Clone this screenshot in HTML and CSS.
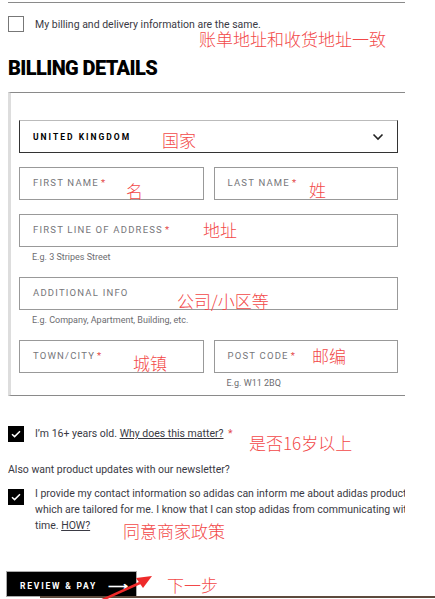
FILE: index.html
```html
<!doctype html>
<html lang="en">
    <head>
        <meta charset="UTF-8" />
        <meta name="viewport" content="width=device-width, initial-scale=1.0" />
        <title>Billing Details</title>
        <link rel="stylesheet" href="styles.css">
    </head>
    <body>
        <div class="page">
            <div class="topRule"></div>

            <label class="check sameAddress">
                <span class="box"></span>
                <span class="checkText">My billing and delivery information are the same.</span>
            </label>

            <h2 class="title">BILLING DETAILS</h2>

            <div class="billing">
                <div class="select">
                    <span>UNITED KINGDOM</span>
                    <svg width="12" height="8" viewBox="0 0 12 8"><path d="M1.5 1.5 L6 6 L10.5 1.5" fill="none" stroke="#222" stroke-width="1.6"/></svg>
                </div>

                <div class="row">
                    <div class="field"><span class="label">FIRST NAME<i>*</i></span></div>
                    <div class="field"><span class="label">LAST NAME<i>*</i></span></div>
                </div>

                <div class="field"><span class="label">FIRST LINE OF ADDRESS<i>*</i></span></div>
                <div class="hint">E.g. 3 Stripes Street</div>

                <div class="field"><span class="label">ADDITIONAL INFO</span></div>
                <div class="hint">E.g. Company, Apartment, Building, etc.</div>

                <div class="row">
                    <div class="col">
                        <div class="field"><span class="label">TOWN/CITY<i>*</i></span></div>
                    </div>
                    <div class="col">
                        <div class="field"><span class="label">POST CODE<i>*</i></span></div>
                        <div class="hint">E.g. W11 2BQ</div>
                    </div>
                </div>
            </div>

            <label class="check ageCheck">
                <span class="box checked">
                    <svg width="10" height="8" viewBox="0 0 10 8"><path d="M1 4.2 L3.6 6.6 L9 1.2" fill="none" stroke="#fff" stroke-width="1.5"/></svg>
                </span>
                <span class="checkText">I&#8217;m 16+ years old. <u>Why does this matter?</u> <i class="req">*</i></span>
            </label>

            <p class="question">Also want product updates with our newsletter?</p>

            <label class="check newsCheck">
                <span class="box checked">
                    <svg width="10" height="8" viewBox="0 0 10 8"><path d="M1 4.2 L3.6 6.6 L9 1.2" fill="none" stroke="#fff" stroke-width="1.5"/></svg>
                </span>
                <span class="checkText lines">
                    <span>I provide my contact information so adidas can inform me about adidas products</span>
                    <span>which are tailored for me. I know that I can stop adidas from communicating with me at any</span>
                    <span>time. <u>HOW?</u></span>
                </span>
            </label>

            <button class="payButton">REVIEW &amp; PAY <span class="arrow">&#10230;</span></button>
            <div class="bottomRule"></div>

            <!-- red notes drawn on top of the screenshot -->
            <span class="note n1">账单地址和收货地址一致</span>
            <span class="note n2">国家</span>
            <span class="note n3">名</span>
            <span class="note n4">姓</span>
            <span class="note n5">地址</span>
            <span class="note n6">公司/小区等</span>
            <span class="note n7">城镇</span>
            <span class="note n8">邮编</span>
            <span class="note n9">是否16岁以上</span>
            <span class="note n10">同意商家政策</span>
            <span class="note n11">下一步</span>
            <svg class="redArrow" width="70" height="30" viewBox="0 0 70 30">
                <path d="M2 29 L44 10" stroke="#ee2a2a" stroke-width="2.5" fill="none"/>
                <path d="M54 4 L38 6 L45 16 Z" fill="#ee2a2a"/>
            </svg>
        </div>
    </body>
</html>
```

FILE: styles.css
```css
body {
    margin: 0;
    font-family: Roboto, "Noto Sans", sans-serif;
    color: #3a3a44;
    background: #fff;
}
.page {
    position: relative;
    width: 435px;
    height: 599px;
    overflow: hidden;
    padding: 2px 0 0 8px;
    box-sizing: border-box;
}
.topRule {
    width: 397px;
    border-top: 1px solid #8a8a8a;
}
.check {
    display: flex;
    align-items: flex-start;
    width: 397px;
    overflow: hidden;
}
.box {
    flex: none;
    width: 14px;
    height: 14px;
    border: 1px solid #777;
    display: flex;
    align-items: center;
    justify-content: center;
}
.box.checked {
    width: 16px;
    height: 16px;
    border: none;
    background: #000;
}
.checkText {
    font-size: 10.5px;
    margin-left: 11px;
    white-space: nowrap;
}
.sameAddress {
    margin-top: 13px;
}
.sameAddress .checkText {
    margin-top: 2px;
}
.title {
    margin: 25px 0 0 0;
    font-size: 20px;
    font-weight: 900;
    letter-spacing: -0.6px;
    color: #000;
    line-height: 22px;
}
.billing {
    box-sizing: border-box;
    width: 397px;
    margin-top: 13px;
    border-top: 1px solid #8a8a8a;
    border-left: 3px solid #ddd;
    border-bottom: 1px solid #8a8a8a;
    padding: 27px 7px 6px 8px;
    display: flex;
    flex-direction: column;
}
.select {
    height: 31px;
    border: 1px solid #333;
    border-top-color: #bbb;
    display: flex;
    align-items: center;
    justify-content: space-between;
    padding: 0 13px 0 13px;
    font-size: 8.5px;
    font-weight: 700;
    letter-spacing: 2px;
    color: #000;
}
.row {
    display: flex;
    gap: 10px;
    margin-top: 14px;
}
.row > * {
    flex: 1 1 0;
    min-width: 0;
}
.col .field {
    margin-top: 0;
}
.field {
    box-sizing: border-box;
    height: 33px;
    border: 1px solid #999;
    margin-top: 14px;
    padding: 0 13px;
    display: flex;
    align-items: center;
}
.row > .field {
    margin-top: 0;
}
.label {
    font-size: 9.5px;
    letter-spacing: 1.2px;
    color: #76767a;
    margin-bottom: 2px;
}
.label i, .req {
    font-style: normal;
    color: #e34a4a;
    margin-left: 2px;
}
.hint {
    font-size: 9px;
    color: #6c6c70;
    padding: 5px 0 0 13px;
    height: 11px;
}
.ageCheck {
    margin-top: 30px;
}
.ageCheck .checkText {
    margin-top: 1px;
}
.question {
    margin: 21px 0 0 0;
    font-size: 10.5px;
}
.newsCheck {
    margin-top: 13px;
    height: 48px;
}
.lines {
    display: flex;
    flex-direction: column;
    line-height: 16px;
    margin-top: -3px;
}
u {
    text-decoration: underline;
}
.payButton {
    margin: 34px 0 0 -2px;
    width: 131px;
    height: 26px;
    background: #000;
    color: #fff;
    border: 1px solid #aaa;
    font-family: Roboto, sans-serif;
    font-size: 8.5px;
    font-weight: 700;
    letter-spacing: 1.8px;
    text-align: left;
    padding: 4px 0 0 13px;
    display: flex;
    align-items: center;
}
.arrow {
    margin-left: 11px;
    font-size: 14px;
    letter-spacing: 0;
}
.bottomRule {
    position: absolute;
    left: 40px;
    right: 0;
    bottom: 1px;
    height: 2px;
    background: #5d4a3c;
}
.note {
    position: absolute;
    color: #f24848;
    font-family: "Noto Sans CJK SC", sans-serif;
    font-weight: 300;
    font-size: 17px;
    line-height: 18px;
    white-space: nowrap;
}
.n1 { left: 199px; top: 30px; }
.n2 { left: 162px; top: 131px; }
.n3 { left: 126px; top: 182px; }
.n4 { left: 309px; top: 181px; }
.n5 { left: 203px; top: 221px; }
.n6 { left: 177px; top: 292px; }
.n7 { left: 133px; top: 354px; }
.n8 { left: 312px; top: 347px; }
.n9 { left: 249px; top: 434px; }
.n10 { left: 123px; top: 522px; }
.n11 { left: 167px; top: 576px; }
.redArrow {
    position: absolute;
    left: 98px;
    top: 572px;
}
```
